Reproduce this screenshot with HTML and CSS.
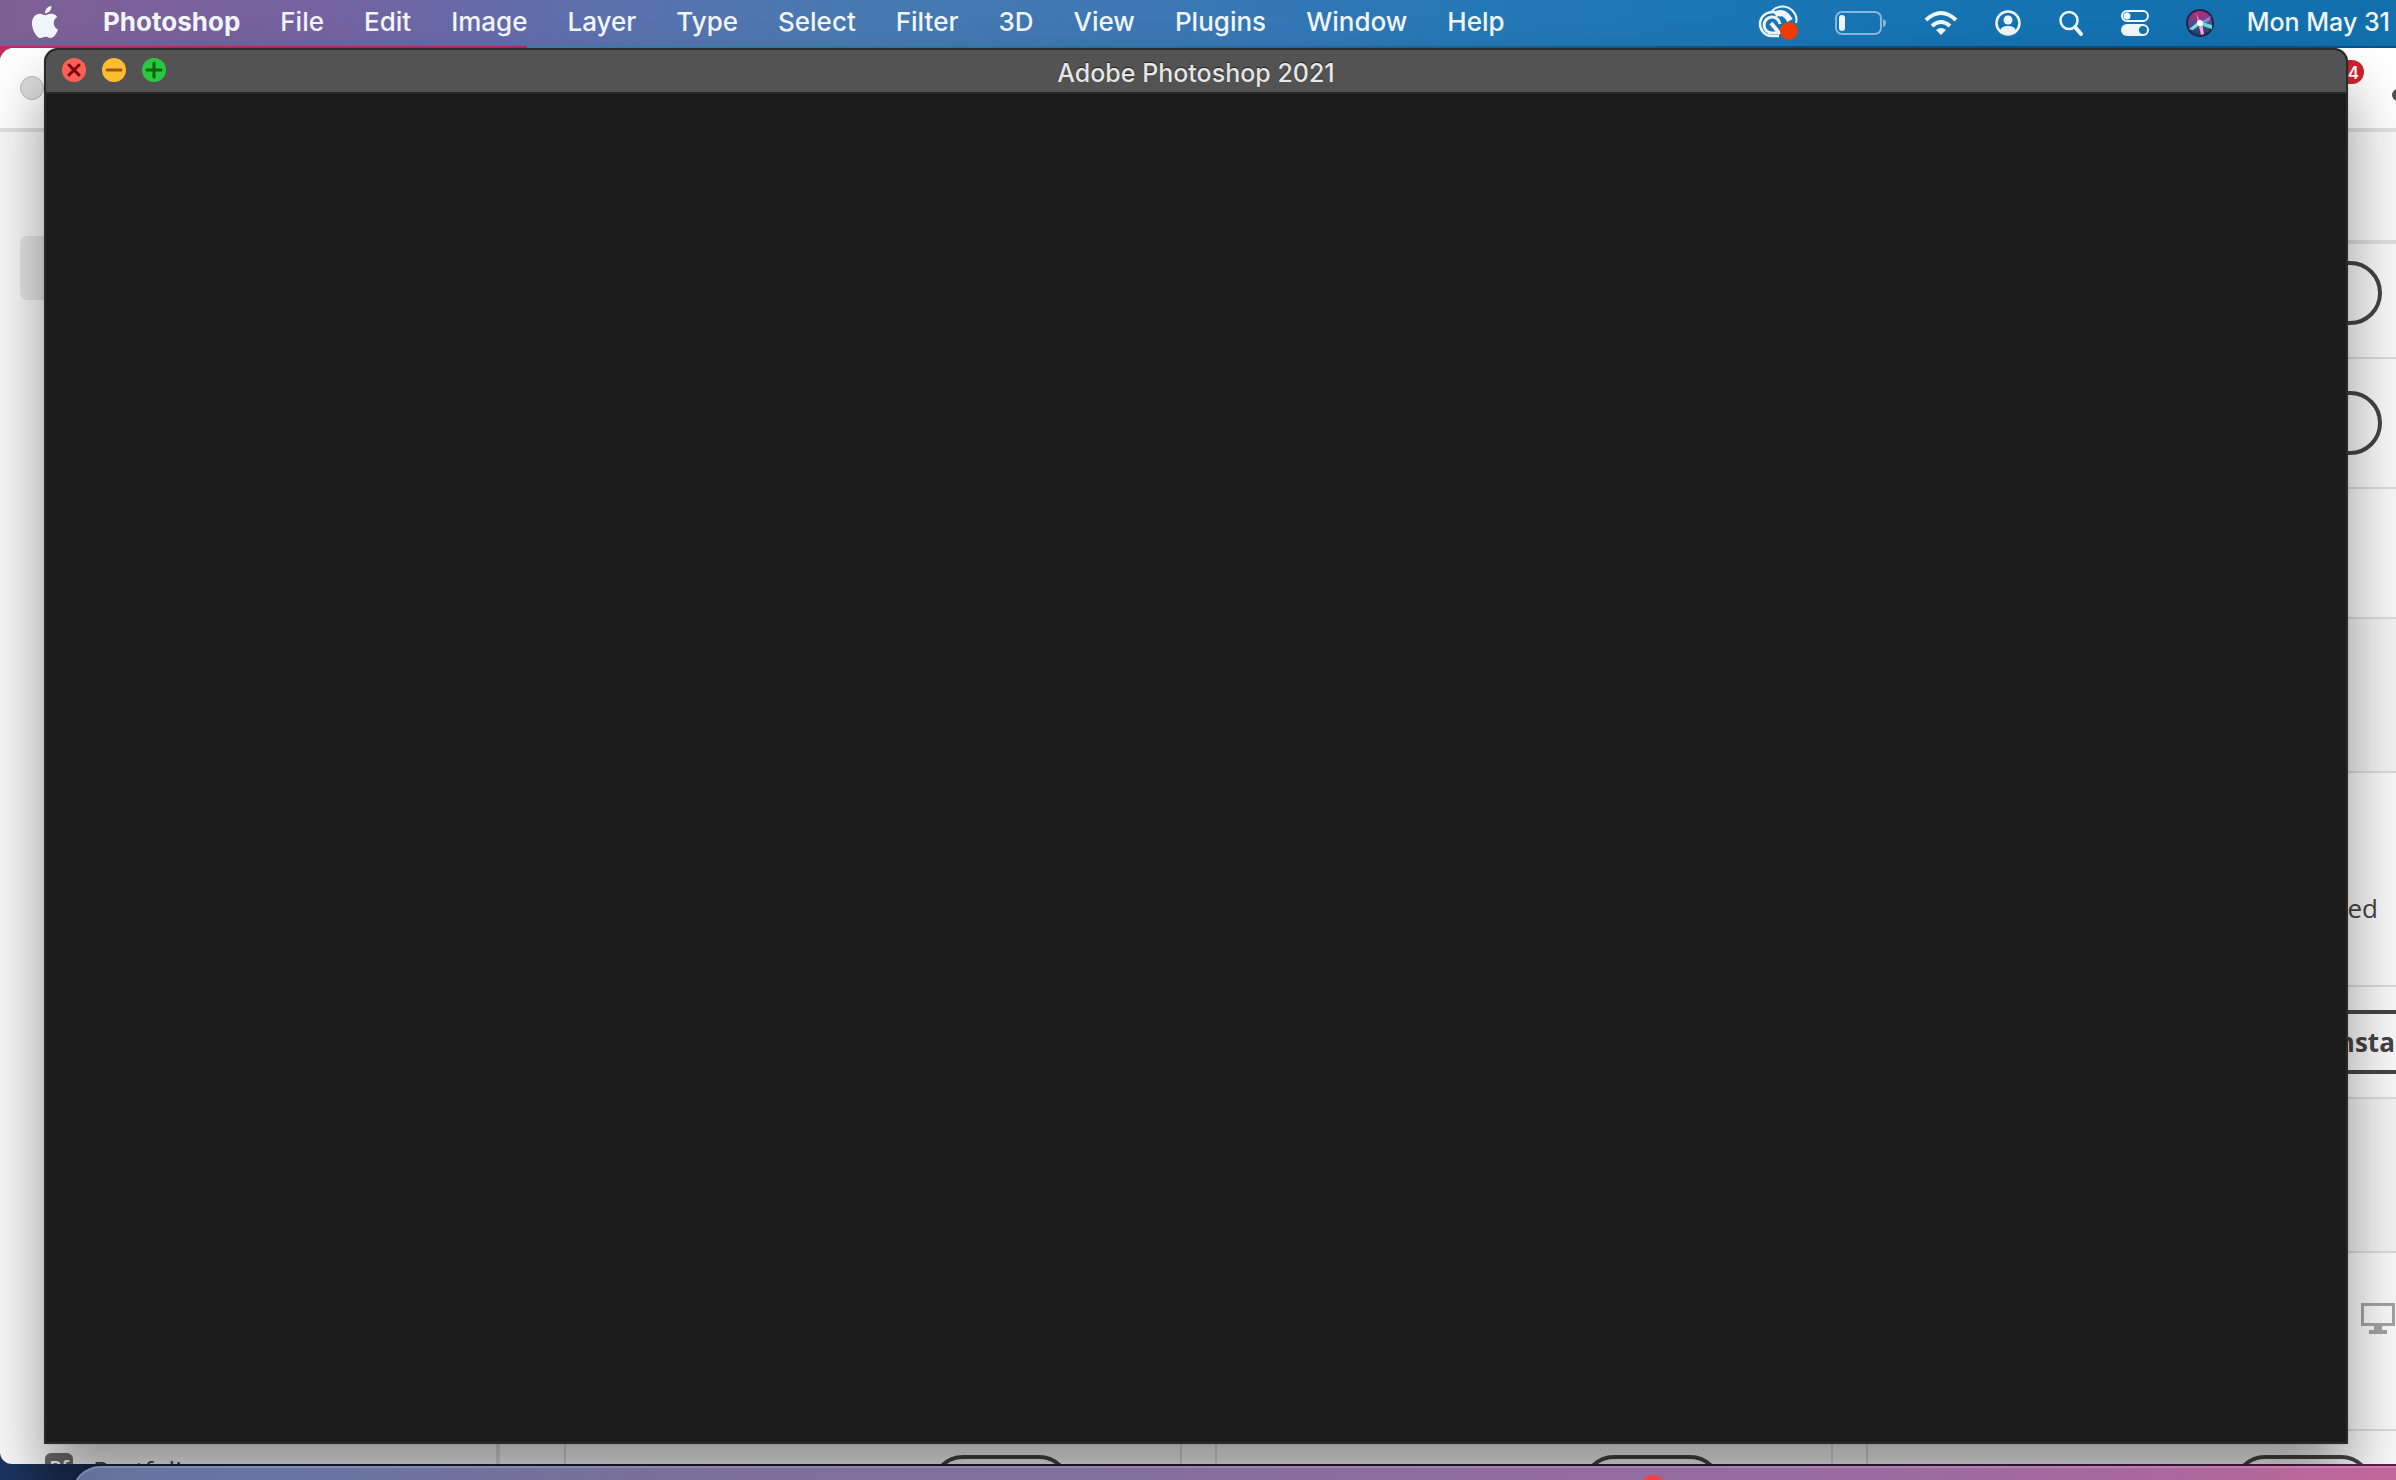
FILE: index.html
```html
<!DOCTYPE html>
<html lang="en">
<head>
<meta charset="utf-8">
<title>Adobe Photoshop 2021</title>
<link rel="stylesheet" href="styles.css">
</head>
<body>
<div class="desktop">
  <header class="menubar">
    <nav class="menus" aria-label="Application menu">
      <button class="apple" aria-label="Apple"><svg width="32" height="32" viewBox="0 0 24 24" fill="currentColor"><path d="M12.152 6.896c-.948 0-2.415-1.078-3.96-1.04-2.04.027-3.91 1.183-4.961 3.014-2.117 3.675-.546 9.103 1.519 12.09 1.013 1.454 2.208 3.09 3.792 3.039 1.52-.065 2.09-.987 3.935-.987 1.831 0 2.35.987 3.96.948 1.637-.026 2.676-1.48 3.676-2.948 1.156-1.688 1.636-3.325 1.662-3.415-.039-.013-3.182-1.221-3.22-4.857-.026-3.04 2.48-4.494 2.597-4.559-1.429-2.09-3.623-2.324-4.39-2.376-2-.156-3.675 1.09-4.61 1.09zM15.53 3.83c.843-1.012 1.4-2.427 1.245-3.83-1.207.052-2.662.805-3.532 1.818-.78.896-1.454 2.338-1.273 3.714 1.338.104 2.715-.688 3.559-1.701"/></svg></button>
      <button class="menu menu-app">Photoshop</button>
      <button class="menu">File</button>
      <button class="menu">Edit</button>
      <button class="menu">Image</button>
      <button class="menu">Layer</button>
      <button class="menu">Type</button>
      <button class="menu">Select</button>
      <button class="menu">Filter</button>
      <button class="menu">3D</button>
      <button class="menu">View</button>
      <button class="menu">Plugins</button>
      <button class="menu">Window</button>
      <button class="menu">Help</button>
    </nav>
    <div class="status">
      <button aria-label="Creative Cloud"><svg width="40" height="36" viewBox="0 0 40 36" fill="none" stroke="currentColor"><path d="M14 6a14 13 0 0 1 24 12" stroke-width="2"/><path d="M17 9.500q9-5 15 6" stroke-width="6"/><path d="M21 31h-7a12 12 0 1 1 9-20" stroke-width="2.500"/><path d="M19 28h-5a8 8 0 1 1 8-9" stroke-width="3"/><path d="M13 18l9 11" stroke-width="4"/><circle cx="31" cy="26" r="9" fill="#f03c00" stroke="none"/></svg></button>
      <button aria-label="Battery"><svg width="52" height="26" viewBox="0 0 52 26"><rect x="1" y="2" width="45" height="22" rx="6" fill="none" stroke="#86b8dd" stroke-width="2"/><rect x="4" y="5" width="6" height="16" rx="3" fill="currentColor"/><path d="M48 9q3 1 3 4t-3 4z" fill="#86b8dd"/></svg></button>
      <button aria-label="Wi-Fi"><svg width="34" height="26" viewBox="0 0 34 26" fill="none" stroke="currentColor" stroke-width="4"><path d="M2 10Q17-4 32 10M8 16q9-8 18 0"/><path d="M12 20q5-4 10 0l-5 5z" fill="currentColor" stroke="none"/></svg></button>
      <button aria-label="User"><svg width="26" height="26" viewBox="0 0 26 26"><circle cx="13" cy="13" r="11.500" fill="none" stroke="currentColor" stroke-width="2.500"/><circle cx="13" cy="10" r="4.500" fill="currentColor"/><path d="M5 21q1-5 8-5t8 5q-8 7-16 0z" fill="currentColor"/></svg></button>
      <button aria-label="Search"><svg width="26" height="26" viewBox="0 0 26 26" fill="none" stroke="currentColor" stroke-linecap="round"><circle cx="11" cy="10.500" r="8.500" stroke-width="2.500"/><path d="M17 17l6 7" stroke-width="4"/></svg></button>
      <button aria-label="Control Center"><svg width="28" height="26" viewBox="0 0 28 26"><rect x="1" y="1" width="26" height="10" rx="5" fill="none" stroke="currentColor" stroke-width="2"/><circle cx="6" cy="6" r="3.500" fill="currentColor"/><rect x="0" y="14" width="28" height="12" rx="6" fill="currentColor"/><circle cx="22" cy="20" r="4" fill="#1672b0"/></svg></button>
      <button aria-label="Siri"><svg width="28" height="28" viewBox="0 0 28 28"><defs><linearGradient id="siri" x1="0" y1="0" x2="0" y2="1"><stop offset="0" stop-color="#c52676"/><stop offset=".5" stop-color="#5b4a90"/><stop offset="1" stop-color="#1a3f62"/></linearGradient></defs><circle cx="14" cy="14" r="13" fill="url(#siri)" stroke="#262450" stroke-width="2"/><path d="M13 12L3 20l4 1 8-6z" fill="#6fe6ea"/><path d="M13 14l12-7-2 5-8 4z" fill="#7d86e8"/><path d="M13 12l13 4v4l-12-4z" fill="#5fe0c8"/><path d="M12 13l3 13 3-1-2-11z" fill="#f4a8e0"/><path d="M10 4l2 10h3z" fill="#f07ab4"/><circle cx="14" cy="14" r="3" fill="#fff"/></svg></button>
      <button class="clock">Mon May 31</button>
    </div>
  </header>

  <section class="cloud" aria-label="Creative Cloud">
    <div class="cloud-bar">
      <span class="cloud-dot"></span>
      <span class="account"></span>
      <span class="badge">4</span>
    </div>
    <div class="cloud-body">
      <aside class="sidebar">
        <div class="selected"></div>
        <a class="side-link" href="#"><span class="side-icon">Pf</span>Portfolio</a>
      </aside>
      <main class="content">
        <div class="row row-head"></div>
        <div class="row row-first"><button class="pill" aria-label="Open"></button></div>
        <div class="row row-app"><button class="pill" aria-label="Open"></button></div>
        <div class="row row-app"></div>
        <div class="row row-tall"></div>
        <div class="row row-note"><span class="note">red</span></div>
        <div class="row row-install"><button class="pill pill-install">Install</button></div>
        <div class="row row-tall"></div>
        <div class="row row-device"><svg width="34" height="32" viewBox="0 0 34 32"><path d="M1.500 1.500h31v20h-31z" fill="none" stroke="#a2a2a2" stroke-width="3"/><path d="M13 22h8v5h5v4H8v-4h5z" fill="#a2a2a2"/></svg></div>
        <div class="cards">
          <div class="card"><button class="pill" aria-label="Open"></button></div>
          <div class="card"><button class="pill" aria-label="Open"></button></div>
          <div class="card"><button class="pill" aria-label="Open"></button></div>
        </div>
      </main>
    </div>
  </section>

  <section class="photoshop" aria-label="Adobe Photoshop 2021">
    <div class="titlebar">
      <div class="lights">
        <button class="light light-close" aria-label="Close"><svg width="24" height="24" viewBox="0 0 24 24"><path d="M7 7l10 10M17 7L7 17"/></svg></button>
        <button class="light light-min" aria-label="Minimize"><svg width="24" height="24" viewBox="0 0 24 24"><path d="M5 12h14"/></svg></button>
        <button class="light light-max" aria-label="Zoom"><svg width="24" height="24" viewBox="0 0 24 24"><path d="M5 12h14M12 5v14"/></svg></button>
      </div>
      <h1 class="title">Adobe Photoshop 2021</h1>
    </div>
  </section>

  <div class="dock"><span class="dock-badge"></span></div>
</div>
</body>
</html>
```
FILE: styles.css
```css
* { box-sizing: border-box; }

body {
  margin: 0;
  font-family: Inter, "Liberation Sans", sans-serif;
  font-size: 26px;
  font-weight: 500;
}

button {
  margin: 0;
  padding: 0;
  border: 0;
  background: none;
  color: inherit;
  font: inherit;
}

svg { display: block; }

.desktop {
  position: relative;
  height: 100vh;
  overflow: hidden;
  background:
    linear-gradient(#c62c58, #c62c58) 0 0 / 100% 80px no-repeat,
    linear-gradient(90deg, #1b3560, #16203c 6%, #221a38 40%, #351c44 75%, #641c4c);
}

.menubar {
  display: flex;
  justify-content: space-between;
  height: 48px;
  padding: 0 6px 0 29px;
  border-bottom: 2px solid;
  border-image: linear-gradient(90deg, #c62c58, #b82c58 22%, #3a88aa 22%, #2a78a4 50%, #0d5288 75%) 1;
  background: linear-gradient(90deg, #7e5f93, #7562a0 13%, #5c70ae 25%, #4879b0 35%, #3a77b5 50%, #2378b5 62%, #1674b3 80%, #116fac);
  color: #f1f5fc;
  text-shadow: 0 2px 5px rgba(0, 0, 0, .25);
}

.menus, .status {
  display: flex;
  align-items: center;
  white-space: nowrap;
  line-height: 44px;
}

.menus { gap: 40px; padding-bottom: 2px; }
.status { gap: 37px; }
.apple { margin-right: 2px; }
.menu-app { font-weight: 700; }
.clock { margin-left: -4px; padding-bottom: 2px; font-size: 25px; }

.cloud {
  position: absolute;
  inset: 48px 0 16px;
  display: flex;
  flex-direction: column;
  overflow: hidden;
  border-radius: 14px 0 0 12px;
  background: #f8f8f8;
  color: #444;
}

.cloud-bar {
  position: relative;
  flex: none;
  display: flex;
  align-items: center;
  justify-content: space-between;
  height: 84px;
  padding-left: 20px;
  border-bottom: 4px solid #e0e0e0;
  background: #fff;
}

.cloud-dot {
  width: 24px;
  height: 24px;
  border: 1px solid #b8b8b8;
  border-radius: 50%;
  background: #dcdcdc;
}

.account {
  width: 12px;
  height: 12px;
  margin: 14px -8px 0 0;
  border-radius: 50%;
  background: #505050;
}

.badge {
  position: absolute;
  top: 12px;
  right: 32px;
  width: 34px;
  height: 24px;
  padding-right: 5px;
  border-radius: 12px;
  background: #d0242e;
  color: #fff;
  font-size: 17px;
  font-weight: 600;
  line-height: 26px;
  text-align: right;
}

.cloud-body { display: flex; flex: 1; min-height: 0; }

.sidebar {
  flex: none;
  display: flex;
  flex-direction: column;
  justify-content: space-between;
  width: 500px;
  padding-top: 104px;
  border-right: 4px solid #dcdcdc;
}

.selected {
  height: 64px;
  margin: 0 20px;
  border-radius: 8px;
  background: #e4e4e4;
}

.side-link {
  display: flex;
  gap: 20px;
  height: 11px;
  padding-left: 45px;
  overflow: hidden;
  color: #444;
  font: 26px/34px "Open Sans", sans-serif;
  text-decoration: none;
}

.side-icon {
  flex: none;
  width: 28px;
  height: 28px;
  border-radius: 6px;
  background: #6c6c6c;
  color: #fff;
  font-size: 20px;
  font-weight: 600;
  line-height: 30px;
  text-align: center;
}

.content { flex: 1; min-width: 0; }

.row {
  display: flex;
  align-items: center;
  justify-content: flex-end;
  padding-right: 14px;
  border-bottom: 2px solid #dadada;
}

.row-head { height: 112px; border-bottom: 4px solid #dedede; }
.row-first { height: 115px; padding-bottom: 16px; }
.row-app { height: 130px; }
.row-tall { height: 154px; background: #f2f2f2; }
.row-note { height: 214px; padding: 58px 18px 0 0; }
.row-install { height: 112px; padding: 0; }
.row-device { height: 178px; padding: 0 1px 44px 0; }

.pill {
  width: 140px;
  height: 64px;
  border: 4px solid #444;
  border-radius: 32px;
}

.pill-install { width: 200px; margin-right: -74px; font: 700 26px/56px "Open Sans", sans-serif; }
.note { font: 26px/36px "Open Sans", sans-serif; }

.cards {
  display: grid;
  grid-template-columns: repeat(3, 618px);
  gap: 33px;
  padding-left: 64px;
}

.card {
  display: flex;
  justify-content: flex-end;
  padding: 24px 109px 0 0;
  border: solid #dadada;
  border-width: 0 2px;
}

.photoshop {
  position: absolute;
  inset: 48px 48px 36px 44px;
  border: 2px solid #2a2a2a;
  border-radius: 14px 14px 0 0;
  background: #1b1b1b;
  box-shadow: 0 40px 60px rgba(0, 0, 0, .4), 0 0 1px rgba(0, 0, 0, .5);
}

.titlebar {
  display: grid;
  grid-template-columns: 1fr auto 1fr;
  height: 44px;
  padding-left: 16px;
  border-bottom: 2px solid #292929;
  border-radius: 12px 12px 0 0;
  background: #535353;
}

.lights { display: flex; gap: 16px; padding-top: 8px; }

.light {
  width: 24px;
  height: 24px;
  border-radius: 50%;
  fill: none;
  stroke-width: 3px;
  stroke-linecap: round;
}

.light-close { background: #ff5f57; stroke: #7e0508; }
.light-min { background: #febc2e; stroke: #985712; }
.light-max { background: #28c840; stroke: #0b650d; }

.title {
  margin: 0;
  padding-right: 16px;
  color: #e6e6e6;
  font-size: 25px;
  font-weight: 500;
  line-height: 46px;
  text-shadow: 0 -1px 1px #222;
}

.dock {
  position: absolute;
  inset: auto -40px -60px 72px;
  height: 74px;
  border: 2px solid rgba(255, 255, 255, .16);
  border-radius: 28px;
  background: linear-gradient(90deg, #62739a, #6876a3 8%, #7a7099 25%, #806f9b 43%, #8f6c9f 58%, #9b6ba0 78%, #ad689c 90%, #c6669b);
}

.dock-badge {
  position: absolute;
  top: 7px;
  left: 1567px;
  width: 24px;
  height: 24px;
  border-radius: 50%;
  background: #f5413c;
}
```
